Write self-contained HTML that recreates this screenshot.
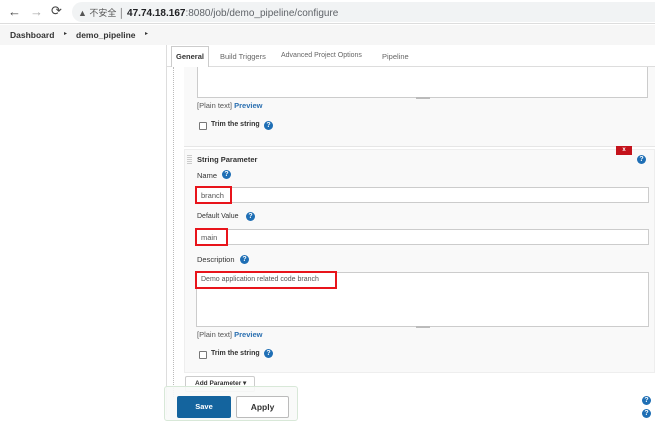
<!DOCTYPE html><html><head><style>
*{margin:0;padding:0;box-sizing:border-box}
body{width:655px;height:415px;overflow:hidden;background:#fff;font-family:"Liberation Sans","Noto Sans CJK SC",sans-serif;font-size:7.5px;color:#333;position:relative}
.a{position:absolute}
.q{position:absolute;width:9px;height:9px;border-radius:50%;background:#1f6fb5;color:#fff;font-size:7px;font-weight:bold;text-align:center;line-height:9px}
.in{position:absolute;background:#fff;border:1px solid #ccc}
.red{position:absolute;border:2px solid #e8141b}
.lbl{position:absolute;font-size:7.5px;color:#333;white-space:nowrap}
.cb{position:absolute;width:8px;height:8px;border:1px solid #777;background:#fff;border-radius:1px}
</style></head><body>
<div class="a" style="left:0;top:0;width:655px;height:24px;background:#fff;border-bottom:1px solid #ddd"></div>
<div class="a" style="left:8px;top:4px;font-size:13px;color:#444">←</div>
<div class="a" style="left:30px;top:4px;font-size:13px;color:#aaa">→</div>
<div class="a" style="left:51px;top:3px;font-size:13px;color:#444">⟳</div>
<div class="a" style="left:72px;top:2px;width:600px;height:20px;border-radius:10px;background:#f1f3f4"></div>
<div class="a" style="left:78px;top:6px;font-size:9px;color:#555">▲ 不安全 │ <span style="color:#202124;font-weight:bold;font-size:10px">47.74.18.167</span><span style="color:#5f6368;font-size:10px">:8080/job/demo_pipeline/configure</span></div>
<div class="a" style="left:0;top:25px;width:655px;height:20px;background:#f6f6f6"></div>
<div class="a" style="left:10px;top:30px;font-size:8.5px;font-weight:bold;color:#333">Dashboard</div>
<div class="a" style="left:64px;top:30px;font-size:6px;color:#333">▸</div>
<div class="a" style="left:76px;top:30px;font-size:8.5px;font-weight:bold;color:#333">demo_pipeline</div>
<div class="a" style="left:145px;top:30px;font-size:6px;color:#333">▸</div>
<div class="a" style="left:166px;top:45px;width:489px;height:370px;border-left:1px solid #ddd;background:#fff"></div>
<div class="a" style="left:166px;top:66px;width:489px;height:1px;background:#ddd"></div>
<div class="a" style="left:171px;top:46px;width:38px;height:21px;background:#fff;border:1px solid #ccc;border-bottom:none;font-weight:bold;text-align:center;line-height:20px;color:#333">General</div>
<div class="a" style="left:220px;top:52px;color:#666">Build Triggers</div>
<div class="a" style="left:281px;top:52px;color:#666;font-size:7px">Advanced Project Options</div>
<div class="a" style="left:382px;top:52px;color:#666">Pipeline</div>
<div class="a" style="left:173px;top:67px;height:330px;border-left:1px dotted #bbb"></div>
<div class="a" style="left:184px;top:67px;width:471px;height:80px;background:#f9f9f9;border-bottom:1px solid #e6e6e6"></div>
<div class="in" style="left:197px;top:67px;width:451px;height:31px;border-top:none"></div>
<div class="a" style="left:416px;top:97px;width:14px;height:2px;background:#bbb"></div>
<div class="lbl" style="left:197px;top:101px;color:#555">[Plain text] <b style="color:#2a6fb0">Preview</b></div>
<div class="cb" style="left:199px;top:122px"></div>
<div class="lbl" style="left:211px;top:121px;font-weight:bold;font-size:7px">Trim the string</div>
<div class="q" style="left:264px;top:121px">?</div>
<div class="a" style="left:184px;top:149px;width:471px;height:224px;background:#f9f9f9;border:1px solid #eee"></div>
<div class="a" style="left:187px;top:155px;width:5px;height:10px;background:repeating-linear-gradient(#ccc 0 1px,transparent 1px 2px)"></div>
<div class="lbl" style="left:197px;top:155px;font-weight:bold">String Parameter</div>
<div class="a" style="left:616px;top:146px;width:16px;height:9px;background:#c4131c;color:#fff;font-size:6px;font-weight:bold;text-align:center;line-height:9px">x</div>
<div class="q" style="left:637px;top:155px">?</div>
<div class="lbl" style="left:197px;top:171px">Name</div><div class="q" style="left:222px;top:170px">?</div>
<div class="in" style="left:196px;top:187px;width:453px;height:16px"></div>
<div class="red" style="left:195px;top:186px;width:37px;height:18px"></div>
<div class="lbl" style="left:201px;top:191px;color:#555">branch</div>
<div class="lbl" style="left:197px;top:213px;font-size:7px">Default Value</div><div class="q" style="left:246px;top:212px">?</div>
<div class="in" style="left:196px;top:229px;width:453px;height:16px"></div>
<div class="red" style="left:195px;top:228px;width:33px;height:18px"></div>
<div class="lbl" style="left:201px;top:233px;color:#555">main</div>
<div class="lbl" style="left:197px;top:255px">Description</div><div class="q" style="left:240px;top:255px">?</div>
<div class="in" style="left:196px;top:272px;width:453px;height:55px"></div>
<div class="red" style="left:195px;top:271px;width:142px;height:18px"></div>
<div class="lbl" style="left:201px;top:276px;color:#555;font-size:7px">Demo application related code branch</div>
<div class="a" style="left:416px;top:326px;width:14px;height:2px;background:#bbb"></div>
<div class="lbl" style="left:197px;top:330px;color:#555">[Plain text] <b style="color:#2a6fb0">Preview</b></div>
<div class="cb" style="left:199px;top:351px"></div>
<div class="lbl" style="left:211px;top:350px;font-weight:bold;font-size:7px">Trim the string</div>
<div class="q" style="left:264px;top:349px">?</div>
<div class="a" style="left:185px;top:376px;width:70px;height:16px;background:#fff;border:1px solid #ccc;border-radius:2px;font-size:6.5px;font-weight:bold;line-height:14px;padding-left:9px">Add Parameter ▾</div>
<div class="a" style="left:164px;top:386px;width:134px;height:35px;background:rgba(248,250,248,.9);border:1px solid #d8e8d8;border-radius:3px"></div>
<div class="a" style="left:177px;top:396px;width:54px;height:22px;background:#14649e;border-radius:2px;color:#fff;font-weight:bold;text-align:center;line-height:22px">Save</div>
<div class="a" style="left:236px;top:396px;width:53px;height:22px;background:#fff;border:1px solid #bbb;border-radius:2px;font-weight:bold;text-align:center;line-height:20px;font-size:8.5px">Apply</div>
<div class="q" style="left:642px;top:396px">?</div>
<div class="q" style="left:642px;top:409px">?</div>
</body></html>
